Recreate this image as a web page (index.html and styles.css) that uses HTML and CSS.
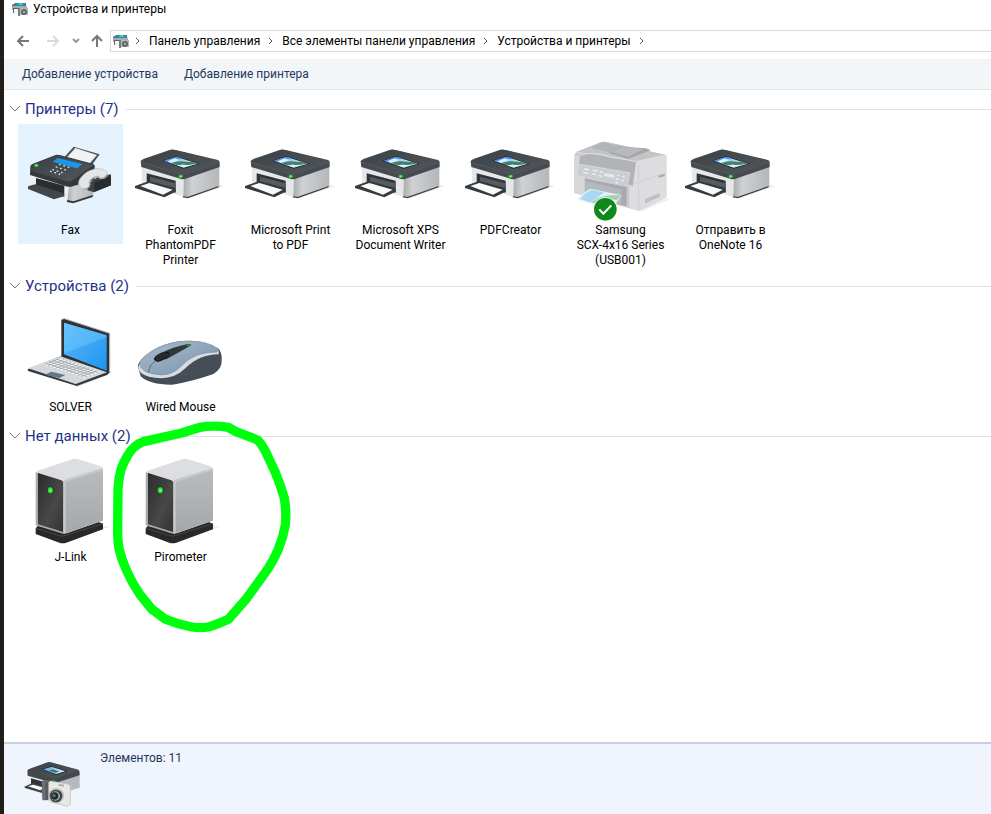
FILE: index.html
```html
<!DOCTYPE html>
<html lang="ru">
<head>
<meta charset="utf-8">
<title>Устройства и принтеры</title>
<link rel="stylesheet" href="styles.css">
</head>
<body>
<svg class="defs" width="0" height="0" aria-hidden="true">
  <defs>
    <linearGradient id="dark" x1="0" y1="0" x2="1" y2="1"><stop offset="0" stop-color="#3b4044"/><stop offset="1" stop-color="#53585c"/></linearGradient>
    <linearGradient id="side" x1="0" y1="0" x2="1" y2="0"><stop offset="0" stop-color="#a9abad"/><stop offset=".25" stop-color="#cfd1d2"/><stop offset="1" stop-color="#b4b6b8"/></linearGradient>
    <linearGradient id="screen" x1="0" y1="0" x2="1" y2="1"><stop offset="0" stop-color="#5dbdfb"/><stop offset="1" stop-color="#1e93ee"/></linearGradient>
    <linearGradient id="photo" x1="0" y1="0" x2="1" y2="1"><stop offset="0" stop-color="#3f8ee8"/><stop offset=".5" stop-color="#b5dcf8"/><stop offset="1" stop-color="#e5f3fa"/></linearGradient>
    <linearGradient id="mouse" x1="0" y1="0" x2="1" y2="1"><stop offset="0" stop-color="#a9bdd0"/><stop offset="1" stop-color="#7990a8"/></linearGradient>
    <linearGradient id="front" x1="0" y1="0" x2="1" y2="1"><stop offset="0" stop-color="#2b2b2b"/><stop offset=".6" stop-color="#484848"/><stop offset="1" stop-color="#333"/></linearGradient>
    <linearGradient id="boxside" x1="0" y1="0" x2="0" y2="1"><stop offset="0" stop-color="#b9bcbe"/><stop offset="1" stop-color="#a4a8aa"/></linearGradient>
    <radialGradient id="led"><stop offset="0" stop-color="#7cff7c"/><stop offset="1" stop-color="#12c322"/></radialGradient>
    <filter id="soft"><feGaussianBlur stdDeviation="2"/></filter>
  </defs>
  <symbol id="printer" viewBox="-6 12 315 294">
    <path d="M170 230 270 196 284 198 180 234z" fill="#e4e6e8"/>
    <path d="M35 140 162 175V231L132 222 36 190z" fill="#e6e7e8"/>
    <path d="M162 172 268 139V198L172 232 160 228z" fill="url(#side)"/>
    <path d="M160 228 172 231 266 198V202L173 235 158 232z" fill="#3a3e42"/>
    <path d="M50 160 137 182V218L50 196z" fill="#303438"/>
    <path d="M60 170 137 190V205L60 184z" fill="#565b60"/>
    <path d="M15 198 55 184 137 208V215L103 232 15 204z" fill="#363b3f"/>
    <path d="M31 198 58 189 128 209 99 224z" fill="#fafafa"/>
    <path d="M32 124Q33 119 42 116L121 89Q128 87 137 90L264 120Q270 123 269 129V141L167 176Q160 179 151 176L34 141z" fill="#454b50"/>
    <path d="M34 123 123 90Q128 88 137 91L268 124 165 158Q158 160 149 158z" fill="url(#dark)"/>
    <path d="M34 127 150 162Q158 164 166 161L268 127" fill="none" stroke="#5b6166" stroke-width="2"/>
    <path d="M97 122 138 108 209 131 161 146z" fill="#17212c"/>
    <path d="M102 122 139 110 203 131 161 143z" fill="url(#photo)"/>
    <path d="M102 122 139 110 155 115 140 118 116 126z" fill="#4a94ea"/>
    <path d="M112 124 134 115 148 120 135 125 122 128z" fill="#d9effc"/>
    <path d="M124 129Q144 122 156 124L190 127 200 131 170 136 158 134 142 136z" fill="#43816a"/>
    <path d="M140 136 158 134 180 136 161 142z" fill="#d9f0fa"/>
    <ellipse cx="152" cy="169" rx="7" ry="5" fill="url(#led)"/>
  </symbol>
  <symbol id="box" viewBox="54 93 315 294">
    <path d="M270 338 330 321 310 318z" fill="#ddd" opacity=".6"/>
    <path d="M107 325 114 317 200 340 296 306 309 311V328L199 368Q187 372 178 368L107 342z" fill="#292929"/>
    <path d="M108 325 178 347Q187 350 198 346L308 311" fill="none" stroke="#444" stroke-width="3"/>
    <path d="M107 161Q108 154 117 151L212 119Q224 114 235 118L302 139Q309 142 309 151L195 185z" fill="#dcdee1"/>
    <path d="M190 187Q191 181 199 178L309 145V302L191 342z" fill="url(#boxside)"/>
    <path d="M190 187Q191 181 199 178L309 145V151L202 184Q197 186 197 193V340L191 342z" fill="#c6c9cb"/>
    <path d="M107 157 191 184V342L107 316z" fill="#a8abac"/>
    <path d="M114 159 184 181Q189 183 189 189V336L114 313z" fill="url(#front)"/>
    <ellipse cx="151" cy="211" rx="9" ry="12" fill="#17331a"/>
    <ellipse cx="151" cy="211" rx="8" ry="10" fill="url(#led)"/>
  </symbol>
  <symbol id="small" viewBox="0 0 16 16">
    <path d="M0 4 3 2H14V6H0z" fill="#666c72"/>
    <path d="M4 2H13L12 5H3z" fill="#188dd5"/><path d="M7 2H10L11 4H6z" fill="#55d45a"/>
    <path d="M0 5H15V9H0z" fill="#a8adb1"/><path d="M1 7H8V12H1z" fill="#5b6268"/>
    <path d="M2 8H6V13H2z" fill="#f5f5f5"/><path d="M6 7H8V15H6z" fill="#777c81"/>
    <path d="M8 7H16V14H8z" fill="#b4b8bb"/><circle cx="12" cy="11" r="3" fill="#60666c"/><circle cx="12" cy="11" r="1" fill="#9dd4d0"/>
  </symbol>
</svg>

<header class="title"><svg class="small-icon" aria-hidden="true"><use href="#small"/></svg><h1>Устройства и принтеры</h1></header>

<nav class="nav" aria-label="Навигация">
  <button class="nav-btn" aria-label="Назад"><svg viewBox="0 0 14 14"><path d="M13 7H2M7 2 2 7l5 5" stroke="#777"/></svg></button>
  <button class="nav-btn forward" aria-label="Вперед"><svg viewBox="0 0 14 14"><path d="M1 7H12M7 2l5 5-5 5" stroke="#dadada"/></svg></button>
  <button class="nav-btn recent" aria-label="Последние расположения"><svg viewBox="0 0 14 14"><path d="M4 5l3 3 3-3" stroke="#999"/></svg></button>
  <button class="nav-btn up" aria-label="Вверх"><svg viewBox="0 0 14 14"><path d="M7 13V2M2 7l5-5 5 5" stroke="#777"/></svg></button>
  <div class="address">
    <svg class="small-icon" aria-hidden="true"><use href="#small"/></svg>
    <svg class="sep" viewBox="0 0 6 8"><path d="M1 1l3 3-3 3"/></svg>
    <a href="#">Панель управления</a>
    <svg class="sep" viewBox="0 0 6 8"><path d="M1 1l3 3-3 3"/></svg>
    <a href="#">Все элементы панели управления</a>
    <svg class="sep" viewBox="0 0 6 8"><path d="M1 1l3 3-3 3"/></svg>
    <a href="#">Устройства и принтеры</a>
    <svg class="sep" viewBox="0 0 6 8"><path d="M1 1l3 3-3 3"/></svg>
  </div>
</nav>

<div class="toolbar">
  <button>Добавление устройства</button>
  <button>Добавление принтера</button>
</div>

<main>
  <section class="group">
    <h2><svg class="chev" viewBox="0 0 12 8"><path d="M1 1l5 5 5-5"/></svg>Принтеры (7)</h2>
    <div class="items">
      <button class="item selected">
        <svg class="pic" viewBox="24 12 315 294" aria-hidden="true">
          <path d="M62 165 180 190V245L63 205z" fill="#eeeff0"/>
          <path d="M178 190 250 172V230L190 248 172 243z" fill="url(#side)"/>
          <path d="M172 240 190 244 248 225V231L190 250 170 246z" fill="#3a3d40"/>
          <path d="M78 174 163 197V230L78 205z" fill="#292d30"/>
          <path d="M54 199 76 193 162 220V229L132 238 54 207z" fill="#40464a"/>
          <path d="M160 115 191 80 269 103 239 145z" fill="#4e5357"/>
          <path d="M169 114 196 84 261 105 232 139z" fill="#f1f2f3"/>
          <path d="M61 139Q61 134 69 131L137 105Q143 103 152 106L248 131Q256 135 254 142V180L188 199Q178 202 168 199L60 165z" fill="#34393d"/>
          <path d="M63 137 138 107Q144 105 151 107L251 136 184 183Q178 186 169 183L63 153z" fill="url(#dark)"/>
          <path d="M128 125 143 114 217 132 201 145 188 142z" fill="#1699ec"/>
          <path d="M147 133l5 1M160 137l5 1M173 141l5 1M137 141l5 1M150 145l5 1M163 149l5 1M127 149l5 1M140 153l5 1M153 157l5 1M120 154l5 1M133 158l5 1M146 162l5 1" stroke="#ddd" stroke-width="4"/>
          <ellipse cx="79" cy="136" rx="7" ry="5" fill="url(#led)"/>
          <path d="M228 197 264 170 303 163V196L252 217 233 211z" fill="#3c4145"/>
          <path d="M253 188 303 168V196L253 215z" fill="#282c2f"/>
          <path d="M207 197Q202 184 216 169 229 153 253 147 268 143 285 150 294 154 292 164 286 178 271 175L262 168Q242 174 238 188 242 202 227 207 215 207 207 197z" fill="#e4e5e7" stroke="#bbbec1" stroke-width="2"/>
          <path d="M221 207Q238 207 240 192L238 187Q244 172 263 170L271 175Q284 177 291 164" fill="none" stroke="#a7abaf" stroke-width="4"/>
        </svg><span>Fax</span></button>
      <button class="item"><svg class="pic" aria-hidden="true"><use href="#printer"/></svg><span>Foxit</span><span>PhantomPDF</span><span>Printer</span></button>
      <button class="item"><svg class="pic" aria-hidden="true"><use href="#printer"/></svg><span>Microsoft Print</span><span>to PDF</span></button>
      <button class="item"><svg class="pic" aria-hidden="true"><use href="#printer"/></svg><span>Microsoft XPS</span><span>Document Writer</span></button>
      <button class="item"><svg class="pic" aria-hidden="true"><use href="#printer"/></svg><span>PDFCreator</span></button>
      <button class="item">
        <svg class="pic" viewBox="24 -3 315 294" aria-hidden="true">
          <path d="M235 256 318 222 330 222 240 260z" fill="#ececee"/>
          <path d="M43 93Q43 84 51 80L124 51Q130 49 139 51L315 89Q320 91 319 99V218L236 257 43 204z" fill="#c9cacc"/>
          <path d="M51 80 124 51Q130 49 139 51L315 89 228 121 55 88z" fill="#c3c4c6"/>
          <path d="M92 68 128 52 192 65 155 83z" fill="#b2b4b6"/>
          <path d="M145 84 187 65 257 70 272 76 205 101z" fill="#a4a6a9"/>
          <path d="M154 81 190 66 250 72 204 95z" fill="#b8babc"/>
          <path d="M49 82 76 87Q114 83 151 96L230 110 317 90" fill="none" stroke="#dcdddf" stroke-width="4"/>
          <path d="M207 120 228 109 319 91V218L236 256 208 250z" fill="#dddde0"/>
          <path d="M218 177 319 143M236 120V255" stroke="#cfcfd3" stroke-width="3"/>
          <path d="M43 91 59 94 60 143 73 154V210L43 203z" fill="#d6d7d9"/>
          <path d="M60 96 80 88Q115 85 151 98L228 111 218 184 205 178 196 144 57 121z" fill="#b1b3b6"/>
          <path d="M51 143Q50 136 61 118L210 143 202 180 191 186 54 153z" fill="#cbcdd2" stroke="#dfe1e4" stroke-width="2"/>
          <path d="M73 132l14 2M70 142l15 3M98 136l14 2M95 146l14 3M119 140l10 2M116 152l10 2M172 151l7 1M187 154l7 1M169 162l7 1M184 166l7 1M167 173l7 1" stroke="#f0f1f2" stroke-width="4"/>
          <path d="M134 144 165 149 162 158 131 153z" fill="#e4e8ec"/>
          <path d="M75 160 200 186V244L170 237V195L75 172z" fill="#a7aaaf"/>
          <path d="M75 168 184 193V238L75 209z" fill="#b4b8bf"/>
          <path d="M51 224Q70 202 91 191L185 211 158 250z" fill="#e6f2fa"/>
          <path d="M60 221Q76 203 93 194L133 202 91 233z" fill="#a9d8f5"/>
          <path d="M93 233Q121 206 184 211L170 226Q126 216 102 235z" fill="#a9cfb0"/>
          <path d="M255 222 299 204V216L255 235z" fill="#bfc0c4"/>
          <path d="M296 152 314 147V153L296 158z" fill="#a5a6aa"/>
          <circle cx="136" cy="253" r="36" fill="#fff"/><circle cx="136" cy="253" r="34" fill="#10891b"/>
          <path d="M118 253 130 266 154 241" fill="none" stroke="#fff" stroke-width="6"/>
        </svg><span>Samsung</span><span>SCX-4x16 Series</span><span>(USB001)</span></button>
      <button class="item"><svg class="pic" aria-hidden="true"><use href="#printer"/></svg><span>Отправить в</span><span>OneNote 16</span></button>
    </div>
  </section>

  <section class="group">
    <h2><svg class="chev" viewBox="0 0 12 8"><path d="M1 1l5 5 5-5"/></svg>Устройства (2)</h2>
    <div class="items">
      <button class="item">
        <svg class="pic" viewBox="24 -12 315 294" aria-hidden="true">
          <path d="M195 243 298 197 307 202 202 247z" fill="#e3e5e7"/>
          <path d="M154 44 162 41 298 85V205L289 208 154 158z" fill="#2f3336"/>
          <path d="M159 42 163 41 299 85V204" fill="none" stroke="#a9adb0" stroke-width="3"/>
          <path d="M162 53 290 91V197L162 148z" fill="url(#screen)"/>
          <path d="M162 53 290 91V96Q230 120 162 144z" fill="#71c7ff" opacity=".45"/>
          <path d="M53 193 151 154 293 203V209L200 243 54 198z" fill="#353a40"/>
          <path d="M54 190 151 154 291 202 197 237z" fill="#d4d7db"/>
          <path d="M97 177 146 159 270 201 224 220z" fill="#f4f5f6"/>
          <g stroke="#8d9297" stroke-width="2"><path d="M106 174 233 216M117 170 244 211M127 166 254 207M137 162 264 203M103 179 150 160M114 182 161 164M125 186 172 168M136 190 183 172M147 193 194 175M158 197 205 179M169 201 216 183M180 204 227 186M191 208 238 190M202 212 249 194M213 215 260 198"/></g>
          <path d="M105 209 124 200 166 210 148 219z" fill="#65768a"/>
        </svg><span>SOLVER</span></button>
      <button class="item">
        <svg class="pic" viewBox="-6 -12 315 294" aria-hidden="true">
          <path d="M25 190Q20 177 38 159 80 116 160 108 226 103 264 130 277 141 275 168 275 193 250 207 190 229 127 239 60 240 32 214z" fill="#454e56"/>
          <path d="M25 187Q24 206 57 215 125 231 166 190 208 148 266 148 269 135 257 126 214 101 148 110 70 118 31 168z" fill="#d5dce3"/>
          <path d="M29 177Q34 163 62 142 103 113 159 109 228 107 258 129 267 138 261 141 192 140 154 183 121 218 72 207 34 201 29 177z" fill="url(#mouse)" stroke="#7a8b9c" stroke-width="2"/>
          <path d="M84 163Q79 153 91 145 129 126 173 117 186 117 183 121 158 136 109 163z" fill="#30363a"/>
          <path d="M73 166Q69 160 80 151 97 139 113 140 124 142 116 153 100 168 82 171z" fill="#191d20"/>
          <path d="M79 157 108 144M78 166 115 148" stroke="#444c52" stroke-width="2"/>
          <path d="M75 169 62 181 55 203" fill="none" stroke="#40505f" stroke-width="2"/>
          <path d="M169 122 181 119" stroke="#24a939" stroke-width="4"/>
        </svg><span>Wired Mouse</span></button>
    </div>
  </section>

  <section class="group marked">
    <h2><svg class="chev" viewBox="0 0 12 8"><path d="M1 1l5 5 5-5"/></svg>Нет данных (2)</h2>
    <div class="items">
      <button class="item"><svg class="pic" aria-hidden="true"><use href="#box"/></svg><span>J-Link</span></button>
      <button class="item"><svg class="pic" aria-hidden="true"><use href="#box"/></svg><span>Pirometer</span></button>
    </div>
    <svg class="loop" viewBox="12 3 900 660" aria-hidden="true"><path d="M430 65 545 39 600 22Q640 15 685 22L706 34 773 60Q785 72 795 91L825 155Q842 195 853 235Q860 275 856 315Q850 350 835 388Q822 418 805 445L740 535 685 598Q655 612 626 621Q600 625 575 621Q535 614 495 597L455 567 421 525Q396 490 379 450Q365 420 357 386Q352 355 353 325L354 205Q356 176 363 149Q370 128 382 108Q400 76 430 65z" filter="url(#soft)"/></svg>
  </section>
</main>

<footer class="status">
  <svg class="status-icon" viewBox="69 72 189 150" aria-hidden="true">
    <path d="M83 120 160 139V174L83 151z" fill="#eceef0"/><path d="M165 139 239 121V158L175 178z" fill="#b6babe"/>
    <path d="M93 130 145 144V163L93 150z" fill="#303539"/>
    <path d="M73 155 98 144 145 157V167L126 174 75 159z" fill="#3d4347"/><path d="M84 154 99 149 133 158 121 166z" fill="#fff"/>
    <path d="M82 108Q82 104 89 101L143 82Q148 80 153 82L235 104Q240 106 239 121L168 143Q161 145 153 142L83 122z" fill="#42484c"/>
    <path d="M84 107 147 83 236 106 164 131z" fill="url(#dark)"/>
    <path d="M126 103 154 93 203 109 168 120z" fill="#10253f"/><path d="M130 103 155 95 196 109 168 117z" fill="url(#photo)"/><path d="M145 107 157 103 178 109 167 114z" fill="#3d8060"/>
    <path d="M125 139 132 134 153 139V194L127 196z" fill="#6b7075"/><path d="M136 141 149 139V195L136 196z" fill="#565b60"/>
    <path d="M146 143Q146 139 153 138L202 147Q211 149 211 154V209L202 213 152 201Q146 199 146 194z" fill="#e8e8e6" stroke="#b9b9b7" stroke-width="2"/>
    <path d="M176 146 192 149V155L176 152z" fill="#b5b29a"/>
    <circle cx="169" cy="182" r="23" fill="#bdbfbe"/><circle cx="168" cy="183" r="19" fill="#3a4145"/><circle cx="166" cy="183" r="14" fill="#a8adaf"/><circle cx="164" cy="183" r="11" fill="#20292e"/><circle cx="162" cy="182" r="5" fill="#448078"/>
    <circle cx="161" cy="138" r="3" fill="#1fc73b"/>
  </svg>
  <p>Элементов: 11</p>
</footer>
</body>
</html>
```
FILE: styles.css
```css
* { box-sizing: border-box; }
body {
  margin: 0;
  min-height: 100vh;
  display: flex;
  flex-direction: column;
  border-left: 4px solid #211d1b;
  background: #fff;
  color: #000;
  font: 12px/15px Roboto, "Noto Sans", sans-serif;
}
button { border: 0; padding: 0; background: none; color: inherit; font: inherit; }
a { color: inherit; text-decoration: none; }
h1, h2, p { margin: 0; font-size: 12px; font-weight: 400; }
.defs { position: absolute; }
.small-icon { width: 16px; height: 16px; flex: none; }

.title { display: flex; align-items: center; gap: 5px; height: 18px; padding-left: 8px; }
.nav { display: flex; align-items: center; height: 41px; padding: 5px 0 0 12px; }
.nav-btn { display: flex; width: 14px; height: 14px; }
.nav-btn svg { width: 14px; height: 14px; fill: none; stroke-width: 2; }
.forward { margin-left: 16px; }
.recent { margin-left: 9px; }
.up { margin-left: 7px; }
.address {
  flex: 1;
  display: flex;
  align-items: center;
  gap: 8px;
  height: 22px;
  margin-left: 6px;
  padding-left: 2px;
  border: 1px solid #d9d9d9;
  border-right: 0;
  white-space: nowrap;
}
.address .small-icon { margin-right: -2px; }
.sep { width: 6px; height: 8px; flex: none; fill: none; stroke: #555; stroke-width: 1; }
.toolbar {
  display: flex;
  align-items: center;
  gap: 26px;
  height: 31px;
  padding-left: 18px;
  background: #f3f6f8;
  border-bottom: 1px solid #e4e8ea;
  color: #1e395b;
}

main { flex: 1; padding-top: 4px; }
.group h2 {
  display: flex;
  align-items: center;
  height: 30px;
  padding-left: 5px;
  color: #1e3287;
  font-size: 15px;
  line-height: 20px;
}
.group h2::after { content: ""; flex: 1; height: 1px; margin-left: 7px; background: #e2e2e2; }
.chev { width: 12px; height: 8px; margin-right: 4px; fill: none; stroke: #777; }
.items { display: flex; flex-wrap: wrap; align-items: flex-start; gap: 0 5px; padding-left: 14px; }
.item {
  display: flex;
  flex-direction: column;
  align-items: center;
  width: 105px;
  min-height: 120px;
  padding-bottom: 3px;
  text-align: center;
  white-space: nowrap;
}
.selected { background: #e5f3ff; }
.pic { width: 105px; height: 98px; margin-bottom: 1px; }
.marked { position: relative; }
.loop { position: absolute; top: 0; left: 0; width: 300px; height: 220px; fill: none; stroke: #0f1; stroke-width: 28; stroke-linejoin: round; pointer-events: none; }

.status {
  display: flex;
  gap: 14px;
  min-height: 72px;
  padding: 7px 0 0 19px;
  border-top: 2px solid #c3d0e0;
  background: #f0f4fc;
  color: #1e395b;
}
.status-icon { width: 63px; height: 50px; margin-top: 8px; }
```
